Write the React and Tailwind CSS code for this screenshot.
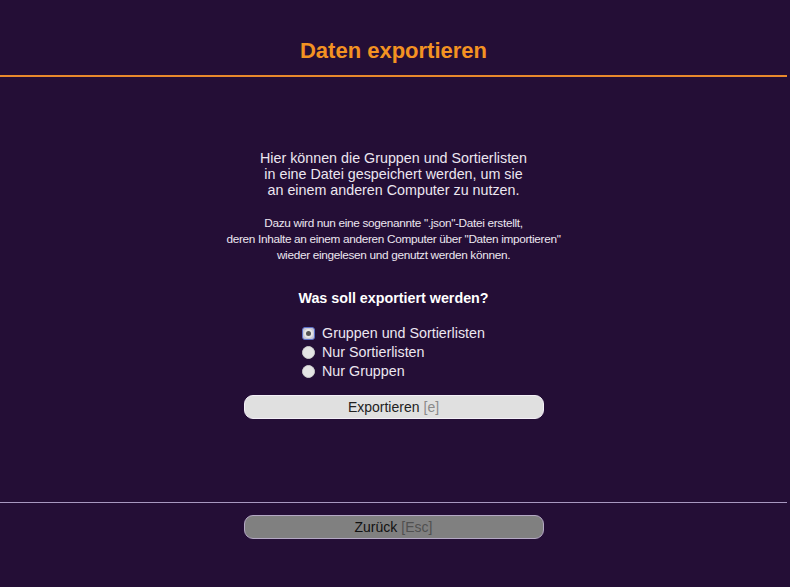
import React from "react";

function Radio({ checked }) {
  if (checked) {
    return (
      <span className="w-[13px] h-[13px] rounded-[3px] border border-[#5b6fc8] bg-[#c8c8d8] flex items-center justify-center">
        <span className="w-[9px] h-[9px] rounded-full bg-[#e6e6e6] flex items-center justify-center">
          <span className="w-[5px] h-[5px] rounded-full bg-[#555]" />
        </span>
      </span>
    );
  }
  return <span className="w-[13px] h-[13px] rounded-full bg-[#e4e4e4] border border-[#cfcfcf]" />;
}

export default function App() {
  const opts = [
    ["Gruppen und Sortierlisten", true],
    ["Nur Sortierlisten", false],
    ["Nur Gruppen", false],
  ];
  return (
    <div className="h-[587px] w-full bg-[#240e36]">
      <div
        className="h-[587px] w-[787px] flex flex-col text-[#ece6f0]"
        style={{ fontFamily: '"Liberation Sans", Arial, sans-serif' }}
      >
        <header className="h-[77px] pt-[38px] border-b-2 border-[#e8892c] flex justify-center">
          <h1 className="text-[22px] leading-[25px] font-bold text-[#f39222]">Daten exportieren</h1>
        </header>
        <main className="flex-1 flex flex-col items-center pt-[73px]">
          <p className="text-[14.3px] leading-[16px] text-center">
            Hier können die Gruppen und Sortierlisten
            <br />
            in eine Datei gespeichert werden, um sie
            <br />
            an einem anderen Computer zu nutzen.
          </p>
          <p className="mt-[17px] text-[11.8px] leading-[16px] text-center tracking-[-0.32px]">
            Dazu wird nun eine sogenannte ".json"-Datei erstellt,
            <br />
            deren Inhalte an einem anderen Computer über "Daten importieren"
            <br />
            wieder eingelesen und genutzt werden können.
          </p>
          <h2 className="mt-[27px] text-[14.3px] leading-[16px] font-bold text-white">Was soll exportiert werden?</h2>
          <div className="mt-[18px] flex flex-col">
            {opts.map(([label, checked]) => (
              <label key={label} className="h-[19px] flex items-center gap-[7px] text-[14.3px]">
                <Radio checked={checked} />
                <span>{label}</span>
              </label>
            ))}
          </div>
          <button className="mt-[14px] w-[300px] h-[24px] rounded-[9px] bg-[#e0e0e0] border border-[#f4f0f8] text-[14px] text-[#222] flex items-center justify-center gap-[4px]">
            <span>Exportieren</span>
            <span className="text-[#8a8a8a]">[e]</span>
          </button>
        </main>
        <footer className="h-[85px] border-t border-[#a898c0] flex flex-col items-center pt-[12px]">
          <button className="w-[300px] h-[24px] rounded-[9px] bg-[#808080] border border-[#b4a8c4] text-[14px] text-[#111] flex items-center justify-center gap-[4px]">
            <span>Zurück</span>
            <span className="text-[#505050]">[Esc]</span>
          </button>
        </footer>
      </div>
    </div>
  );
}
